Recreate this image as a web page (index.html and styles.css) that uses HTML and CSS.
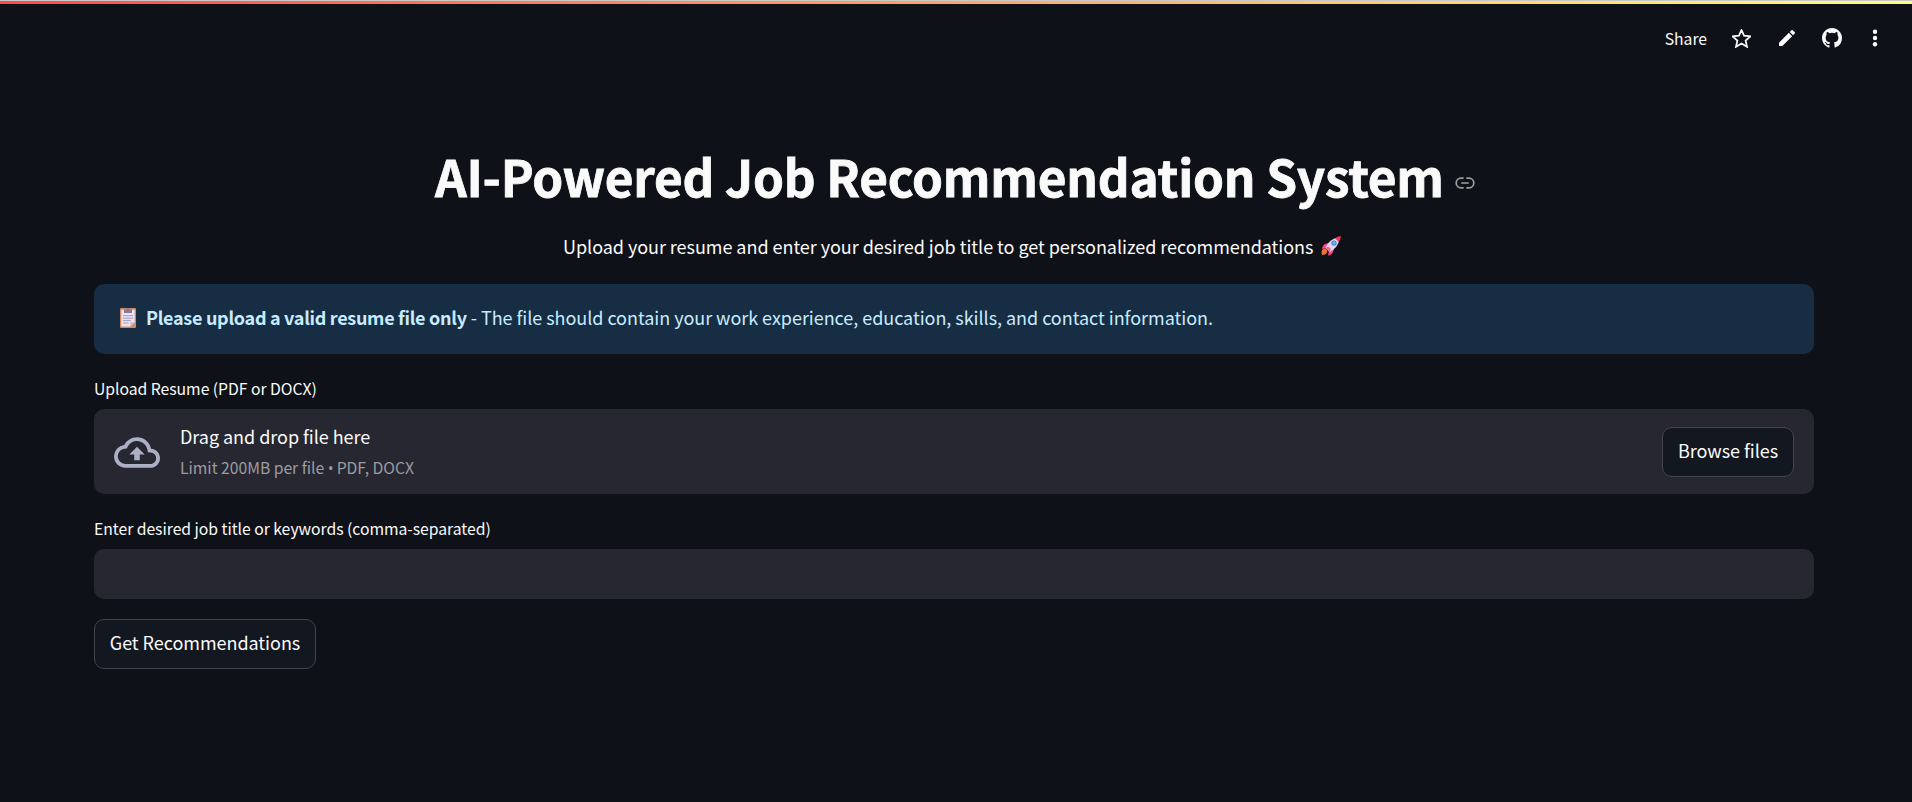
FILE: index.html
```html
<!DOCTYPE html>
<html lang="en">
<head>
<meta charset="utf-8">
<title>AI-Powered Job Recommendation System</title>
<link rel="stylesheet" href="styles.css">
</head>
<body>
<div class="decoration"></div>
<header class="toolbar">
  <span class="share">Share</span>
  <svg class="icon star" viewBox="1 1 17 17"><path d="M9.5 1.900l2.300 5.100 5.600.6-4.200 3.800 1.200 5.500-4.900-2.900-4.900 2.900 1.200-5.500-4.200-3.800 5.600-.6z" fill="none" stroke="#fafafa" stroke-width="1.600" stroke-linejoin="miter"/></svg>
  <svg class="icon pencil" viewBox="3 3 18 18"><path fill="#fafafa" d="M3 17.25V21h3.75L17.81 9.94l-3.75-3.75L3 17.25zM20.71 7.04a1 1 0 0 0 0-1.41l-2.34-2.34a1 1 0 0 0-1.41 0l-1.83 1.83 3.75 3.75 1.83-1.83z"/></svg>
  <svg class="icon github" viewBox="0 0 16 16"><path fill="#fafafa" d="M8 0C3.58 0 0 3.58 0 8c0 3.54 2.29 6.53 5.47 7.59.4.07.55-.17.55-.38 0-.19-.01-.82-.01-1.49-2.01.37-2.53-.49-2.69-.94-.09-.23-.48-.94-.82-1.13-.28-.15-.68-.52-.01-.53.63-.01 1.08.58 1.23.82.72 1.21 1.87.87 2.33.66.07-.52.28-.87.51-1.07-1.78-.2-3.64-.89-3.64-3.95 0-.87.31-1.59.82-2.15-.08-.2-.36-1.02.08-2.12 0 0 .67-.21 2.2.82a7.6 7.6 0 0 1 4 0c1.53-1.04 2.2-.82 2.2-.82.44 1.1.16 1.92.08 2.12.51.56.82 1.27.82 2.15 0 3.07-1.87 3.75-3.65 3.95.29.25.54.73.54 1.48 0 1.07-.01 1.93-.01 2.2 0 .21.15.46.55.38A8.01 8.01 0 0 0 16 8c0-4.42-3.58-8-8-8z"/></svg>
  <svg class="icon dots" viewBox="0 0 6 18"><g fill="#fafafa"><circle cx="3" cy="2.7" r="2.2"/><circle cx="3" cy="9" r="2.2"/><circle cx="3" cy="15.3" r="2.2"/></g></svg>
</header>
<main class="page">
  <div class="heading">
    <h1 class="title">AI-Powered Job Recommendation System</h1>
    <svg class="link" viewBox="0 0 20 12"><path d="M8.6 1.2H6a4.8 4.8 0 0 0 0 9.6h2.6M11.4 1.2H14a4.8 4.8 0 0 1 0 9.6h-2.6M6.2 6h7.6" fill="none" stroke="#9c9da1" stroke-width="1.7"/></svg>
  </div>
  <p class="subtitle"><span class="sub-text">Upload your resume and enter your desired job title to get personalized recommendations</span>
    <svg class="rocket" viewBox="0 0 20 20">
      <path d="M1 14q3-3 5 0 1 2-1 4-2 1-4 1-1-3 0-5z" fill="#e8762c"/>
      <path d="M7 7L3 8.5Q1 11 1 13l5-1zM13 13l-1.5 4Q9 19.500 7 19.500l1-5z" fill="#f8488a"/>
      <path d="M4.500 12Q8 3 17 1.500L18.500 3Q17 12 8.500 16z" fill="#dfd5e6"/>
      <path d="M14 2.300Q16.500 .3 20 0q-.3 3.500-2.300 6z" fill="#f8375f"/>
      <path d="M4.500 12l2.800-1.500L10 13l-1.500 3z" fill="#f3649b"/>
      <circle cx="13" cy="7" r="2.600" fill="#4778c5"/><circle cx="13" cy="7" r="1.700" fill="#60b9f5"/>
    </svg>
  </p>
  <section class="alert">
    <svg class="clipboard" viewBox="0 0 16 20">
      <rect width="16" height="20" rx="1.200" fill="#d48a5c"/>
      <path d="M1.300 1.800h13.400v12.500L10.500 18.600H1.300z" fill="#ece2f2"/>
      <path d="M10.500 18.600v-4.300h4.200z" fill="#c8b2d2"/>
      <path d="M4 1.300h2Q6.500 0 8 0t2 1.300h2V5H4z" fill="#8b7c91"/>
      <path d="M3 7.700h10M3 10.200h10M3 12.600h8M3 15h5.500" stroke="#a294b0" stroke-width=".9"/>
    </svg>
    <strong class="alert-strong">Please upload a valid resume file only</strong>
    <span class="alert-text">- The file should contain your work experience, education, skills, and contact information.</span>
  </section>
  <label class="label label-upload">Upload Resume (PDF or DOCX)</label>
  <section class="dropzone">
    <svg class="cloud" viewBox="0 4 24 16"><path fill="#abb0c5" d="M19.350 10.040A7.490 7.490 0 0 0 12 4C9.110 4 6.600 5.640 5.350 8.040A5.994 5.994 0 0 0 0 14c0 3.310 2.690 6 6 6h13c2.760 0 5-2.240 5-5 0-2.640-2.050-4.780-4.650-4.960zM19 18H6c-2.210 0-4-1.790-4-4 0-2.050 1.530-3.760 3.560-3.970l1.070-.11.5-.95A5.469 5.469 0 0 1 12 6c2.620 0 4.880 1.860 5.390 4.430l.3 1.500 1.530.11A2.980 2.980 0 0 1 22 15c0 1.650-1.350 3-3 3zM8 13h2.550v3h2.900v-3H16l-4-4z"/></svg>
    <div class="drop-text">
      <div class="drop-title">Drag and drop file here</div>
      <div class="drop-limit">Limit 200MB per file <span class="bullet">•</span> PDF, DOCX</div>
    </div>
    <button class="button browse">Browse files</button>
  </section>
  <label class="label label-job" for="job">Enter desired job title or keywords (comma-separated)</label>
  <input class="input" id="job" type="text">
  <button class="button submit">Get Recommendations</button>
</main>
</body>
</html>
```
FILE: styles.css
```css
* { box-sizing: border-box; }
body {
  margin: 0;
  height: 802px;
  overflow: hidden;
  background: #0e1117;
  color: #fafafa;
  font: 18px/30px "Noto Sans CJK SC", "Open Sans", sans-serif;
  letter-spacing: -0.04px;
}
.decoration {
  height: 4px;
  border-top: 1px solid #c9c9c9;
  background: linear-gradient(90deg, #ff4b4b, #fffd80);
}
.toolbar {
  height: 68px;
  display: flex;
  align-items: center;
  justify-content: flex-end;
  padding-right: 34px;
}
.icon { display: block; flex: none; }
.share { font-size: 15.75px; line-height: 26px; margin: 2px 25px 0 0; }
.star { width: 19px; height: 19px; margin-right: 28px; }
.pencil { width: 16px; height: 16px; margin-right: 27px; }
.github { width: 20px; height: 20px; margin-right: 30px; }
.dots { width: 6px; height: 18px; }
.page { padding: 70px 98px 0 94px; white-space: nowrap; }
.heading { display: flex; align-items: center; height: 66px; padding-left: 341px; }
.title {
  margin: 1px 0 0;
  font-size: 49.5px;
  line-height: 66px;
  font-weight: 700;
  letter-spacing: -0.24px;
  -webkit-text-stroke: 0.8px #fafafa;
}
.link { width: 20px; height: 12px; margin: 16px 0 0 11px; }
.subtitle {
  display: flex;
  align-items: center;
  margin: 23px 0;
  padding-left: 469px;
}
.rocket { width: 20px; height: 20px; margin-left: 8px; }
.alert {
  height: 70px;
  display: flex;
  align-items: center;
  padding: 0 24px 4px 26px;
  border-radius: 10px;
  background: #172d43;
  color: #c7ebff;
}
.clipboard { width: 16px; height: 20px; margin: 2px 10px 0 0; }
.alert-strong { margin-right: 4px; letter-spacing: -0.29px; }
.label { display: block; margin: 22px 0 7px; font-size: 15.75px; line-height: 26px; }
.dropzone {
  height: 85px;
  display: flex;
  align-items: center;
  padding: 0 20px;
  border-radius: 10px;
  background: #262730;
}
.cloud { width: 46px; height: 31px; margin: 1px 20px 0 0; }
.drop-text { flex: 1; padding-bottom: 1px; }
.drop-limit { margin-top: 4px; font-size: 15.75px; line-height: 26px; color: #9c9ca0; }
.bullet { font-family: "Open Sans", sans-serif; line-height: 1; letter-spacing: -0.4px; }
.button {
  height: 50px;
  display: block;
  padding: 0 0 4px;
  border: 1px solid #41444c;
  border-radius: 10px;
  background: #131720;
  color: #fafafa;
  font: inherit;
  letter-spacing: inherit;
  text-align: center;
}
.browse { width: 132px; }
.input {
  display: block;
  width: 100%;
  height: 50px;
  padding: 0 16px;
  border: 0;
  border-radius: 10px;
  background: #262730;
  color: #fafafa;
  font: inherit;
}
.submit { width: 222px; margin-top: 20px; }
```
